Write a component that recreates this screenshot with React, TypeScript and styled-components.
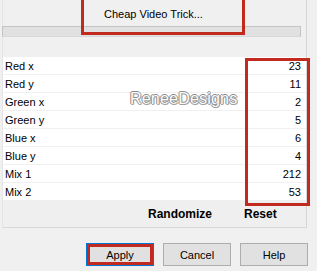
import React from "react";
import styled, { createGlobalStyle } from "styled-components";

const Global = createGlobalStyle`
  html, body { margin: 0; padding: 0; background: #f0f0f0; }
  body { font-family: "Liberation Sans", Arial, sans-serif; font-size: 11px; color: #000; }
`;

const Screen = styled.div`
  position: relative;
  width: 317px;
  height: 271px;
  overflow: hidden;
  background: #f0f0f0;
`;

const Panel = styled.div`
  margin-left: 2px;
  width: 303px;
  border-left: 1px solid #e4e4e4;
  border-right: 1px solid #d6d6d6;
  border-bottom: 1px solid #dadada;
  background: #f0f0f0;
`;

const Header = styled.div`
  height: 57px;
  display: flex;
  flex-direction: column;
`;

const Title = styled.div`
  height: 26px;
  line-height: 28px;
  text-align: center;
  padding-right: 2px;
  font-size: 11px;
`;

const Bar = styled.div`
  height: 9px;
  width: 297px;
  background: #e1e1e1;
  border: 1px solid #c4c4c4;
  border-bottom-color: #d8d8d8;
  box-sizing: content-box;
  margin-left: -1px;
`;

const List = styled.div`
  display: flex;
  flex-direction: column;
  gap: 1px;
  padding-bottom: 1px;
`;

const Row = styled.div`
  height: 17px;
  background: #fff;
  display: flex;
  align-items: center;
  justify-content: space-between;
  padding: 0 5px 0 2px;
`;

const Label = styled.span`
  font-size: 11px;
`;

const Value = styled.span`
  font-size: 11px;
`;

const Footer = styled.div`
  height: 26px;
  display: flex;
  align-items: center;
  background: #efefef;
  font-weight: bold;
  font-size: 12px;
`;

const FooterText = styled.span<{ $w: number }>`
  width: ${(p) => p.$w}px;
  flex: none;
`;

const Buttons = styled.div`
  display: flex;
  justify-content: flex-end;
  gap: 9px;
  padding: 15px 9px 0 0;
`;

const Button = styled.div<{ $primary?: boolean }>`
  width: 68px;
  height: 23px;
  box-sizing: border-box;
  display: flex;
  align-items: center;
  justify-content: center;
  background: #e1e1e1;
  border: 1px solid ${(p) => (p.$primary ? "#0078d7" : "#adadad")};
  box-shadow: ${(p) => (p.$primary ? "inset 0 0 0 3px #c22a1f" : "none")};
  font-size: 11px;
`;

const RedBox = styled.div<{ $l: number; $t: number; $w: number; $h: number }>`
  position: absolute;
  left: ${(p) => p.$l}px;
  top: ${(p) => p.$t}px;
  width: ${(p) => p.$w}px;
  height: ${(p) => p.$h}px;
  border: 3px solid #c22a1f;
  box-sizing: border-box;
  pointer-events: none;
`;

const Watermark = styled.div`
  position: absolute;
  left: 130px;
  top: 90px;
  font-family: "Liberation Sans", Arial, sans-serif;
  font-size: 16px;
  letter-spacing: 0.2px;
  color: #fbfbfb;
  text-shadow: -1px 0 #8a8a8a, 1px 0 #9a9a9a, 0 -1px #8a8a8a, 0 1px #a0a0a0, 1px 1px #bcbcbc;
  pointer-events: none;
`;

const rows: [string, number][] = [
  ["Red x", 23],
  ["Red y", 11],
  ["Green x", 2],
  ["Green y", 5],
  ["Blue x", 6],
  ["Blue y", 4],
  ["Mix 1", 212],
  ["Mix 2", 53],
];

export default function App() {
  return (
    <Screen>
      <Global />
      <Panel>
        <Header>
          <Title>Cheap Video Trick...</Title>
          <Bar />
        </Header>
        <List>
          {rows.map(([l, v]) => (
            <Row key={l}>
              <Label>{l}</Label>
              <Value>{v}</Value>
            </Row>
          ))}
        </List>
        <Footer>
          <FooterText $w={145} />
          <FooterText $w={96}>Randomize</FooterText>
          <FooterText $w={50}>Reset</FooterText>
        </Footer>
      </Panel>
      <Buttons>
        <Button $primary>Apply</Button>
        <Button>Cancel</Button>
        <Button>Help</Button>
      </Buttons>
      <Watermark>ReneeDesigns</Watermark>
      <RedBox $l={81} $t={-3} $w={164} $h={38} />
      <RedBox $l={245} $t={58} $w={65} $h={148} />
    </Screen>
  );
}
